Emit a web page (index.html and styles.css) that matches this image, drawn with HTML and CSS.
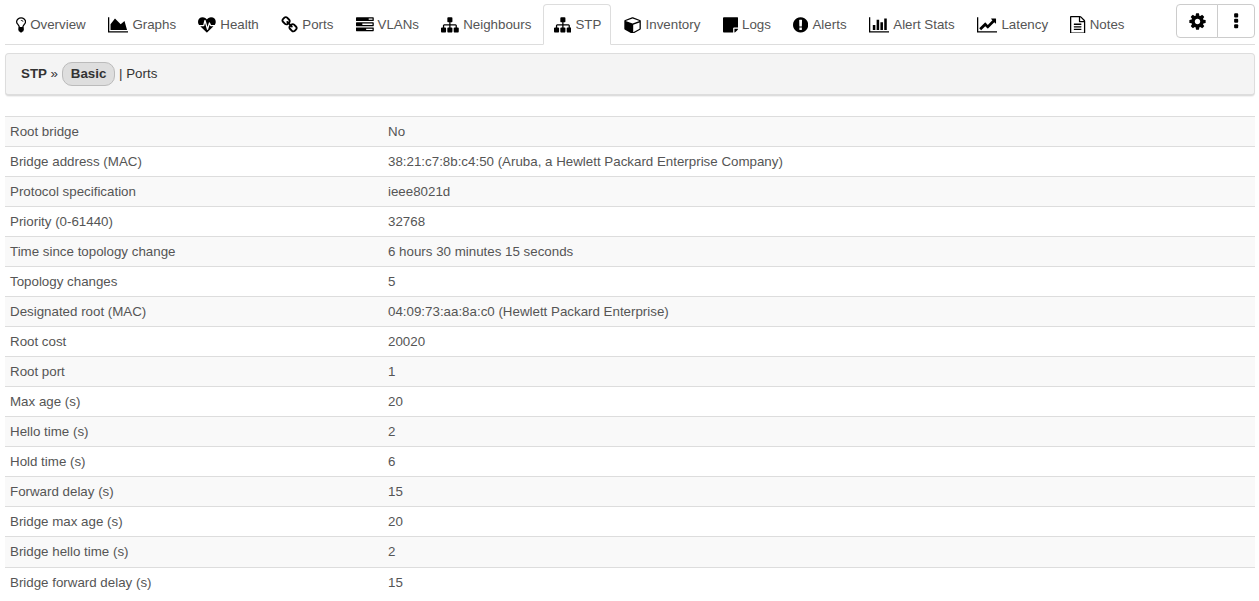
FILE: index.html
```
<!DOCTYPE html>
<html lang="en">
<head>
<meta charset="utf-8">
<title>STP</title>
<link rel="stylesheet" href="styles.css">
</head>
<body>
<header class="topbar">
<nav class="tabs">
<a class="tab"><svg class="icon w10" viewBox="384 0 1024 1792"><path d="M1120 576q0 13-9.5 22.5t-22.5 9.5-22.5-9.5-9.5-22.5q0-46-54-71t-106-25q-13 0-22.5-9.5t-9.5-22.5 9.500-22.500 22.500-9.500q50 0 99.500 16t87 54 37.500 90zm160 0q0-72-34.500-134t-90-101.500-123-62-136.500-22.500-136.500 22.500-123 62-90 101.500-34.500 134q0 101 68 180 10 11 30.500 33t30.500 33q128 153 141 298h228q13-145 141-298 10-11 30.500-33t30.500-33q68-79 68-180zm128 0q0 155-103 268-45 49-74.500 87t-59.500 95.500-34 107.500q47 28 47 82 0 37-25 64 25 27 25 64 0 52-45 81 13 23 13 47 0 46-31.500 71t-77.500 25q-20 44-60 70t-87 26-87-26-60-70q-46 0-77.500-25t-31.500-71q0-24 13-47-45-29-45-81 0-37 25-64-25-27-25-64 0-54 47-82-4-50-34-107.500t-59.500-95.500-74.500-87q-103-113-103-268 0-99 44.500-184.500t117-142 164-89 186.500-32.500 186.500 32.500 164 89 117 142 44.500 184.500z"/></svg><span>Overview</span></a>
<a class="tab"><svg class="icon w20" viewBox="0 0 2048 1792"><path d="M2048 1536v128h-2048v-1536h128v1408h1920zm-384-1024l256 896h-1664v-576l448-576 576 576z"/></svg><span>Graphs</span></a>
<a class="tab"><svg class="icon" viewBox="0 0 1792 1792"><path d="M1280 1024h305q-5 6-10 10.500t-9 7.500l-3 4-623 600q-18 18-44 18t-44-18l-624-602q-5-2-21-20h369q22 0 39.500-13.500t22.500-34.500l70-281 190 667q6 20 23 33t39 13q21 0 38-13t23-33l146-485 56 112q18 35 57 35zm512-428q0 145-103 300h-369l-111-221q-8-17-25.500-27t-36.500-8q-45 5-56 46l-129 430-196-686q-6-20-23.500-33t-39.500-13-39 13.500-22 34.500l-116 464h-423q-103-155-103-300 0-220 127-344t351-124q62 0 126.500 21.500t120 58 95.500 68.500 76 68q36-36 76-68t95.500-68.500 120-58 126.500-21.500q224 0 351 124t127 344z"/></svg><span>Health</span></a>
<a class="tab"><svg class="icon w17" viewBox="32 0 1728 1792"><path d="M1520 1216q0-40-28-68l-208-208q-28-28-68-28-42 0-72 32 3 3 19 18.500t21.500 21.500 15 19 13 25.500 3.500 27.500q0 40-28 68t-68 28q-15 0-27.500-3.500t-25.500-13-19-15-21.500-21.500-18.500-19q-33 31-33 73 0 40 28 68l206 207q27 27 68 27 40 0 68-26l147-146q28-28 28-67zm-703-705q0-40-28-68l-206-207q-28-28-68-28-39 0-68 27l-147 146q-28 28-28 67 0 40 28 68l208 208q27 27 68 27 42 0 72-31-3-3-19-18.500t-21.500-21.500-15-19-13-25.500-3.500-27.500q0-40 28-68t68-28q15 0 27.500 3.500t25.500 13 19 15 21.500 21.500 18.500 19q33-31 33-73zm895 705q0 120-85 203l-147 146q-83 83-203 83-121 0-204-85l-206-207q-83-83-83-203 0-123 88-209l-88-88q-86 88-208 88-120 0-204-84l-208-208q-84-84-84-204t85-203l147-146q83-83 203-83 121 0 204 85l206 207q83 83 83 203 0 123-88 209l88 88q86-88 208-88 120 0 204 84l208 208q84 84 84 204z"/></svg><span>Ports</span></a>
<a class="tab"><svg class="icon" viewBox="0 0 1792 1792"><path d="M1024 1408h640v-128h-640v128zm-384-512h1024v-128h-1024v128zm640-512h384v-128h-384v128zm512 832v256q0 26-19 45t-45 19h-1664q-26 0-45-19t-19-45v-256q0-26 19-45t45-19h1664q26 0 45 19t19 45zm0-512v256q0 26-19 45t-45 19h-1664q-26 0-45-19t-19-45v-256q0-26 19-45t45-19h1664q26 0 45 19t19 45zm0-512v256q0 26-19 45t-45 19h-1664q-26 0-45-19t-19-45v-256q0-26 19-45t45-19h1664q26 0 45 19t19 45z"/></svg><span>VLANs</span></a>
<a class="tab"><svg class="icon" viewBox="0 0 1792 1792"><path id="sitemap" d="M1792 1248v320q0 40-28 68t-68 28h-320q-40 0-68-28t-28-68v-320q0-40 28-68t68-28h96v-192h-512v192h96q40 0 68 28t28 68v320q0 40-28 68t-68 28h-320q-40 0-68-28t-28-68v-320q0-40 28-68t68-28h96v-192h-512v192h96q40 0 68 28t28 68v320q0 40-28 68t-68 28h-320q-40 0-68-28t-28-68v-320q0-40 28-68t68-28h96v-192q0-52 38-90t90-38h512v-192h-96q-40 0-68-28t-28-68v-320q0-40 28-68t68-28h320q40 0 68 28t28 68v320q0 40-28 68t-68 28h-96v192h512q52 0 90 38t38 90v192h96q40 0 68 28t28 68z"/></svg><span>Neighbours</span></a>
<a class="tab active"><svg class="icon" viewBox="0 0 1792 1792"><use href="#sitemap"/></svg><span>STP</span></a>
<a class="tab"><svg class="icon" viewBox="-32 0 1792 1792"><path d="M896 1629l640-349v-636l-640 233v752zm-64-865l698-254-698-254-698 254 698 254zm832-252v768q0 35-18 65t-49 47l-704 384q-28 16-61 16t-61-16l-704-384q-31-17-49-47t-18-65v-768q0-40 23-73t61-47l704-256q22-8 44-8t44 8l704 256q38 14 61 47t23 73z"/></svg><span>Inventory</span></a>
<a class="tab"><svg class="icon w15" viewBox="0 0 1536 1792"><path d="M1024 1248v416h-928q-40 0-68-28t-28-68v-1344q0-40 28-68t68-28h1344q40 0 68 28t28 68v928h-416q-40 0-68 28t-28 68zm128 32h381q-15 82-65 132l-184 184q-50 50-132 65z"/></svg><span>Logs</span></a>
<a class="tab"><svg class="icon w15" viewBox="128 0 1536 1792"><path d="M896 128q209 0 385.500 103t279.500 279.500 103 385.500-103 385.500-279.500 279.500-385.500 103-385.500-103-279.500-279.500-103-385.500 103-385.500 279.500-279.500 385.500-103zm128 1247v-190q0-14-9-23.500t-22-9.500h-192q-13 0-23 10t-10 23v190q0 13 10 23t23 10h192q13 0 22-9.500t9-23.500zm-2-344l18-621q0-12-10-18-10-8-24-8h-220q-14 0-24 8-10 6-10 18l17 621q0 10 10 17.500t24 7.500h185q14 0 23.500-7.500t10.500-17.500z"/></svg><span>Alerts</span></a>
<a class="tab"><svg class="icon w20" viewBox="0 0 2048 1792"><path d="M640 896v512h-256v-512h256zm384-512v1024h-256v-1024h256zm1024 1152v128h-2048v-1536h128v1408h1920zm-640-896v768h-256v-768h256zm384-384v1152h-256v-1152h256z"/></svg><span>Alert Stats</span></a>
<a class="tab"><svg class="icon w20" viewBox="0 0 2048 1792"><path d="M2048 1536v128h-2048v-1536h128v1408h1920zm-128-1248v435q0 21-19.500 29.500t-35.500-7.500l-121-121-633 633q-10 10-23 10t-23-10l-233-233-416 416-192-192 585-585q10-10 23-10t23 10l233 233 464-464-121-121q-16-16-7.500-35.500t29.500-19.500h435q14 0 23 9t9 23z"/></svg><span>Latency</span></a>
<a class="tab"><svg class="icon w15" viewBox="0 0 1536 1792"><path d="M1468 380q28 28 48 76t20 88v1152q0 40-28 68t-68 28h-1344q-40 0-68-28t-28-68v-1600q0-40 28-68t68-28h896q40 0 88 20t76 48zm-444-244v376h376q-10-29-22-41l-313-313q-12-12-41-22zm384 1528v-1024h-416q-40 0-68-28t-28-68v-416h-768v1536h1280zm-1024-864q0-14 9-23t23-9h704q14 0 23 9t9 23v64q0 14-9 23t-23 9h-704q-14 0-23-9t-9-23v-64zm736 224q14 0 23 9t9 23v64q0 14-9 23t-23 9h-704q-14 0-23-9t-9-23v-64q0-14 9-23t23-9h704zm0 256q14 0 23 9t9 23v64q0 14-9 23t-23 9h-704q-14 0-23-9t-9-23v-64q0-14 9-23t23-9h704z"/></svg><span>Notes</span></a>
</nav>
<div class="actions">
<button class="action settings" aria-label="Settings"><svg class="icon" viewBox="0 0 1792 1792"><path d="M1152 896q0-106-75-181t-181-75-181 75-75 181 75 181 181 75 181-75 75-181zm512-109v222q0 12-8 23t-20 13l-185 28q-19 54-39 91 35 50 107 138 10 12 10 25t-9 23q-27 37-99 108t-94 71q-12 0-26-9l-138-108q-44 23-91 38-16 136-29 186-7 28-36 28h-222q-14 0-24.500-8.500t-11.500-21.500l-28-184q-49-16-90-37l-141 107q-10 9-25 9-14 0-25-11-126-114-165-168-7-10-7-23 0-12 8-23 15-21 51-66.500t54-70.500q-27-50-41-99l-183-27q-13-2-21-12.500t-8-23.500v-222q0-12 8-23t19-13l186-28q14-46 39-92-40-57-107-138-10-12-10-24 0-10 9-23 26-36 98.500-107.500t94.500-71.500q13 0 26 10l138 107q44-23 91-38 16-136 29-186 7-28 36-28h222q14 0 24.500 8.500t11.500 21.500l28 184q49 16 90 37l142-107q9-9 24-9 13 0 25 10 129 119 165 170 7 8 7 22 0 12-8 23-15 21-51 66.500t-54 70.500q26 50 41 98l183 28q13 2 21 12.500t8 23.500z"/></svg></button>
<button class="action more" aria-label="More"><svg class="icon" viewBox="32 0 1792 1792"><rect x="704" y="128" width="384" height="384" rx="96"/><rect x="704" y="640" width="384" height="384" rx="96"/><rect x="704" y="1152" width="384" height="384" rx="96"/></svg></button>
</div>
</header>
<div class="panel"><b>STP</b> » <b class="pill">Basic</b> | Ports</div>
<dl class="table">
<div class="row"><dt>Root bridge</dt><dd>No</dd></div>
<div class="row"><dt>Bridge address (MAC)</dt><dd>38:21:c7:8b:c4:50 (Aruba, a Hewlett Packard Enterprise Company)</dd></div>
<div class="row"><dt>Protocol specification</dt><dd>ieee8021d</dd></div>
<div class="row"><dt>Priority (0-61440)</dt><dd>32768</dd></div>
<div class="row"><dt>Time since topology change</dt><dd>6 hours 30 minutes 15 seconds</dd></div>
<div class="row"><dt>Topology changes</dt><dd>5</dd></div>
<div class="row"><dt>Designated root (MAC)</dt><dd>04:09:73:aa:8a:c0 (Hewlett Packard Enterprise)</dd></div>
<div class="row"><dt>Root cost</dt><dd>20020</dd></div>
<div class="row"><dt>Root port</dt><dd>1</dd></div>
<div class="row"><dt>Max age (s)</dt><dd>20</dd></div>
<div class="row"><dt>Hello time (s)</dt><dd>2</dd></div>
<div class="row"><dt>Hold time (s)</dt><dd>6</dd></div>
<div class="row"><dt>Forward delay (s)</dt><dd>15</dd></div>
<div class="row"><dt>Bridge max age (s)</dt><dd>20</dd></div>
<div class="row"><dt>Bridge hello time (s)</dt><dd>2</dd></div>
<div class="row"><dt>Bridge forward delay (s)</dt><dd>15</dd></div>
</dl>
</body>
</html>
```
FILE: styles.css
```
* { box-sizing: border-box; }
body {
  margin: 0;
  padding: 4px 4px 0 5px;
  background: #fff;
  color: #555;
  font: 13.333px/19.047px "Liberation Sans", Arial, sans-serif;
  overflow: hidden;
}
.topbar {
  display: flex;
  justify-content: space-between;
  align-items: flex-start;
  height: 41px;
  border-bottom: 1px solid #ddd;
}
.tabs { display: flex; gap: 2px; }
.tab {
  display: flex;
  align-items: center;
  gap: 4px;
  height: 41px;
  padding: 0 8.38px 0 10px;
  border: 1px solid transparent;
  white-space: nowrap;
}
.tab.active {
  background: #fff;
  border-color: #ddd #ddd #fff;
  border-radius: 4px 4px 0 0;
}
.icon { display: block; flex: none; width: 17.78px; height: 17.78px; fill: #000; }
.w10 { width: 10.16px; }
.w15 { width: 15.24px; }
.w17 { width: 17.14px; }
.w20 { width: 20.32px; }
.actions { display: flex; }
.action {
  display: flex;
  align-items: center;
  justify-content: center;
  height: 34px;
  padding: 0;
  border: 1px solid #ccc;
  background: #fff;
}
.action .icon { width: 19px; height: 19px; }
.settings { width: 42px; border-radius: 4px 0 0 4px; }
.more { width: 38px; margin-left: -1px; border-radius: 0 4px 4px 0; }
.panel {
  height: 43px;
  margin-top: 8px;
  padding: 10px 15px;
  border: 1px solid #ddd;
  border-bottom-width: 2px;
  border-radius: 4px;
  box-shadow: 0 1px 1px rgba(0, 0, 0, 0.06);
  background: #f4f4f4;
  color: #333;
}
.pill {
  display: inline-block;
  margin: -3px 0;
  padding: 2px 8px;
  border: 1px solid #bbb;
  border-radius: 10px;
  background: #dedede;
  line-height: 18px;
}
.table { margin: 19.82px 0 0; }
.row {
  display: flex;
  padding: 5px;
  border-top: 1px solid #ddd;
}
.row:nth-child(odd) { background: #f9f9f9; }
dt { width: 378px; }
dd { margin: 0; }
```
